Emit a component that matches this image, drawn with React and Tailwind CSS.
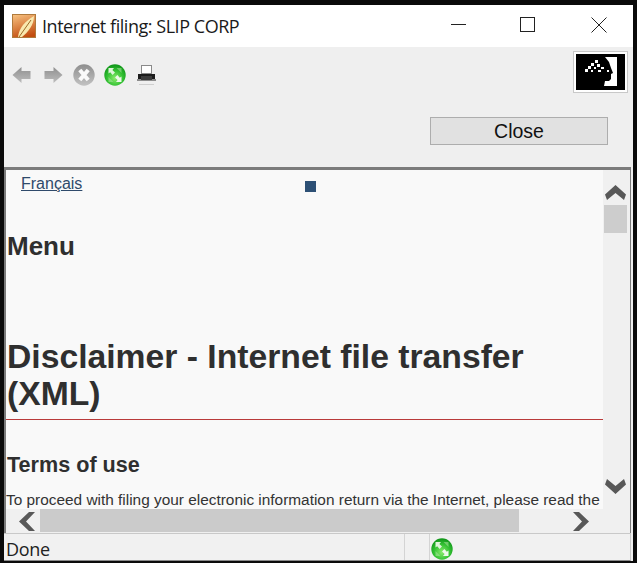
const Globe = ({ size = 22 }) => (
    <svg width={size} height={size} viewBox="0 0 22 22">
        <defs>
            <radialGradient id="globeFill" cx="50%" cy="65%" r="60%">
                <stop offset="0%" stopColor="#8aec6e" />
                <stop offset="60%" stopColor="#35c234" />
                <stop offset="100%" stopColor="#149a1c" />
            </radialGradient>
        </defs>
        <circle cx="11" cy="11" r="10.7" fill="url(#globeFill)" />
        <path d="M4.5 9.5 L4.5 4 L10 4 L8.4 6 L11 8.6 L8.6 11 L6.2 8.2 Z" fill="#dff5da" />
        <path d="M17.5 12.5 L17.5 18 L12 18 L13.6 16 L11 13.4 L13.4 11 L15.8 13.8 Z" fill="#eef9ea" />
        <path d="M12.5 4 L17.5 4 L17.5 9 Z" fill="#a9e69c" opacity="0.55" />
        <path d="M4.5 13 L4.5 18 L9.5 18 Z" fill="#a9e69c" opacity="0.55" />
    </svg>
);

const ArrowLeft = () => (
    <svg width="19" height="18" viewBox="0 0 19 18">
        <defs>
            <linearGradient id="arrowFill" x1="0" y1="0" x2="0" y2="1">
                <stop offset="0%" stopColor="#8f8f8f" />
                <stop offset="100%" stopColor="#bdbdbd" />
            </linearGradient>
        </defs>
        <path d="M0.5 9 L9.5 1 L9.5 5 L18.5 5 L18.5 13 L9.5 13 L9.5 17 Z" fill="url(#arrowFill)" />
    </svg>
);

const ArrowRight = () => (
    <svg width="19" height="18" viewBox="0 0 19 18">
        <path d="M18.5 9 L9.5 1 L9.5 5 L0.5 5 L0.5 13 L9.5 13 L9.5 17 Z" fill="url(#arrowFill)" />
    </svg>
);

const StopIcon = () => (
    <svg width="22" height="22" viewBox="0 0 22 22">
        <defs>
            <linearGradient id="stopFill" x1="0" y1="0" x2="0" y2="1">
                <stop offset="0%" stopColor="#8e8e8e" />
                <stop offset="100%" stopColor="#c2c2c2" />
            </linearGradient>
        </defs>
        <circle cx="11" cy="11" r="10.7" fill="url(#stopFill)" />
        <path d="M6.8 6 L15.2 16 M15.2 6 L6.8 16" stroke="#fafafa" strokeWidth="4" />
    </svg>
);

const PrintIcon = () => (
    <svg width="19" height="21" viewBox="0 0 19 21">
        <rect x="4.5" y="0.5" width="10" height="8" fill="#ffffff" stroke="#8a8a8a" />
        <rect x="1" y="9" width="17" height="5" fill="#1c1c1c" />
        <rect x="0" y="14" width="19" height="2" fill="#8c8c8c" />
        <rect x="4" y="11" width="11" height="4" fill="#3c3c3c" />
        <rect x="2" y="19" width="15" height="1" fill="#cfcfcf" />
    </svg>
);

const AppIcon = () => (
    <svg width="24" height="24" viewBox="0 0 24 24">
        <defs>
            <linearGradient id="appFill" x1="0.2" y1="0" x2="0.5" y2="1">
                <stop offset="0%" stopColor="#f5bd7c" />
                <stop offset="100%" stopColor="#c24d10" />
            </linearGradient>
        </defs>
        <rect x="0.5" y="0.5" width="23" height="23" fill="url(#appFill)" stroke="#b07a3c" />
        <path d="M6 23 C7 14 13 7 22 2 C22 11 16 18 10 23 Z" fill="#f9e8ae" />
        <path d="M7 23 L19 6" stroke="#9a6a26" strokeWidth="1" />
    </svg>
);

const BrainLogo = () => (
    <div className="bg-white border border-[#c8c8c8] p-[2px]">
        <svg className="block" width="49" height="36" viewBox="0 0 49 36">
            <rect width="49" height="36" fill="#000" />
            <path d="M41 3 L41 32 L28 32 L29 27 L33 27 L35 25 L35 20 L37 19 L35 14 L33 8 L29 3 Z" fill="#fff" />
            <g fill="#fff">
                <rect x="19" y="6" width="3" height="3" />
                <rect x="15" y="9" width="3" height="3" />
                <rect x="21" y="10" width="3" height="3" />
                <rect x="12" y="12" width="3" height="3" />
                <rect x="18" y="13" width="2" height="2" />
                <rect x="25" y="13" width="3" height="2" />
                <rect x="9" y="15" width="3" height="3" />
                <rect x="15" y="16" width="2" height="2" />
                <rect x="31" y="16" width="2" height="2" />
                <rect x="22" y="16" width="3" height="2" />
            </g>
        </svg>
    </div>
);

const Chevron = ({ d, width, height }) => (
    <svg className="block" width={width} height={height} viewBox={`0 0 ${width} ${height}`}>
        <path d={d} fill="#585858" />
    </svg>
);

const App = () => {
    return (
        <div className="w-[637px] h-[563px] bg-[#0a0a0a] pt-[5px] px-[4px] pb-[2px] flex flex-col font-['Liberation_Sans',sans-serif] overflow-hidden">
            {/* Title bar */}
            <div className="h-[42px] shrink-0 bg-white flex items-center pl-[8px]">
                <AppIcon />
                <span className="ml-[6px] text-[18px] text-[#1a1a1a] font-['Open_Sans',sans-serif] tracking-[-0.46px]">Internet filing: SLIP CORP</span>
                <div className="ml-auto flex items-center pb-[3px]">
                    <div className="w-[71px] flex justify-center pl-[6px]">
                        <div className="w-[15px] h-[1px] bg-[#222]"></div>
                    </div>
                    <div className="w-[71px] flex justify-center pl-[2px]">
                        <div className="w-[15px] h-[15px] border border-[#222]"></div>
                    </div>
                    <div className="w-[71px] flex justify-center pl-[2px]">
                        <svg width="16" height="16" viewBox="0 0 16 16">
                            <path d="M0.5 0.5 L15.5 15.5 M15.5 0.5 L0.5 15.5" stroke="#222" strokeWidth="1" />
                        </svg>
                    </div>
                </div>
            </div>

            {/* Toolbar */}
            <div className="h-[120px] shrink-0 bg-[#efefef] flex flex-col">
                <div className="flex items-start pl-[8px] pr-[5px] pt-[4px]">
                    <div className="flex items-center pt-[13px]">
                        <ArrowLeft />
                        <div className="ml-[13px]"><ArrowRight /></div>
                        <div className="ml-[10px]"><StopIcon /></div>
                        <div className="ml-[9px]"><Globe /></div>
                        <div className="ml-[11px]"><PrintIcon /></div>
                    </div>
                    <div className="ml-auto">
                        <BrainLogo />
                    </div>
                </div>
                <div className="flex justify-end pr-[25px] mt-[24px]">
                    <div className="w-[178px] h-[28px] bg-[#e1e1e1] border border-[#adadad] flex items-center justify-center text-[19.5px] text-[#111] pt-[2px]">Close</div>
                </div>
            </div>

            {/* Browser frame */}
            <div className="flex-1 min-h-0 flex flex-col bg-[#efefef]">
                <div className="flex-1 min-h-0 border-t-[3px] border-l-[2px] border-r-[1px] border-[#7b7b7b] mr-[2px] bg-[#f0f0f0] flex flex-col">
                    <div className="flex-1 min-h-0 flex">
                        <div className="flex-1 min-w-0 bg-[#f9f9f9] relative overflow-hidden">
                            <a className="absolute left-[15px] top-[4px] text-[16px] leading-[20px] text-[#2f4a6b] underline">Français</a>
                            <div className="absolute left-[299px] top-[11px] w-[11px] h-[11px] bg-[#2d5075]"></div>
                            <h2 className="pt-[62px] pl-[1px] text-[26px] leading-[28px] font-bold text-[#2f2f2f]">Menu</h2>
                            <h1 className="mt-[78px] pl-[1px] text-[33.7px] leading-[37px] font-bold text-[#2f2f2f]">
                                Disclaimer - Internet file transfer (XML)
                            </h1>
                            <div className="mt-[7px] h-[1px] bg-[#b93a3a]"></div>
                            <h3 className="mt-[33px] pl-[1px] text-[21.6px] leading-[24px] font-bold text-[#2f2f2f]">Terms of use</h3>
                            <p className="mt-[13px] text-[15.4px] leading-[20px] text-[#333] whitespace-nowrap">
                                To proceed with filing your electronic information return via the Internet, please read the
                            </p>
                        </div>
                        {/* Vertical scrollbar */}
                        <div className="w-[27px] shrink-0 flex flex-col items-start pl-[1px]">
                            <div className="mt-[15px] ml-[1px]">
                                <Chevron width="21" height="15" d="M10.5 0 L21 9.5 L19 15 L10.5 8 L2 15 L0 9.5 Z" />
                            </div>
                            <div className="mt-[5px] w-[23px] h-[28px] bg-[#cdcdcd]"></div>
                            <div className="mt-auto mb-[15px] ml-[1px]">
                                <Chevron width="21" height="15" d="M10.5 15 L21 5.5 L19 0 L10.5 7 L2 0 L0 5.5 Z" />
                            </div>
                        </div>
                    </div>
                    {/* Horizontal scrollbar */}
                    <div className="h-[24px] shrink-0 flex items-start bg-[#f0f0f0]">
                        <div className="w-[34px] flex justify-end pr-[5px] pt-[3px]">
                            <Chevron width="16" height="19" d="M0 9.5 L10 0 L16 0 L7 9.5 L16 19 L10 19 Z" />
                        </div>
                        <div className="w-[479px] h-[23px] bg-[#cbcbcb]"></div>
                        <div className="ml-[54px] pt-[3px]">
                            <Chevron width="16" height="19" d="M16 9.5 L6 0 L0 0 L9 9.5 L0 19 L6 19 Z" />
                        </div>
                    </div>
                </div>

                {/* Status bar */}
                <div className="h-[28px] shrink-0 border-t border-[#c9c9c9] bg-[#f1f1f1] flex items-center mr-[2px] border-b border-b-[#8a8a8a] border-r border-r-[#c9c9c9]">
                    <span className="w-[400px] pl-[2px] pt-[4px] text-[18px] text-[#222] font-['Open_Sans',sans-serif] tracking-[-0.3px]">Done</span>
                    <div className="w-[25px] h-full border-l border-[#d4d4d4]"></div>
                    <div className="h-full border-l border-[#d4d4d4] pl-[1px] pt-[3px] flex items-center">
                        <Globe />
                    </div>
                </div>
            </div>
        </div>
    );
};

export default App;
